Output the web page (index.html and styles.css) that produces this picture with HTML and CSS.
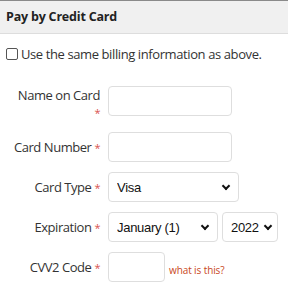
FILE: index.html
```html
<html lang="en">

<head>
    <meta charset="UTF-8">
    <meta name="viewport" content="width=device-width, initial-scale=1.0">
    <title>Pay by Credit Card</title>
    <link rel="stylesheet" href="styles.css">
</head>

<body>
    <div class="panel">
        <div class="panel-head">Pay by Credit Card</div>
        <label class="same-billing">
            <input type="checkbox" class="check">
            <span>Use the same billing information as above.</span>
        </label>

        <form id="card-form" action="/">
            <div class="form-row">
                <label for="card-name" class="field-label">Name on Card <span class="req">*</span></label>
                <input id="card-name" class="in" type="text">
            </div>
            <div class="form-row">
                <label for="card-number" class="field-label">Card Number <span class="req">*</span></label>
                <input id="card-number" class="in" type="text">
            </div>
            <div class="form-row">
                <label for="card-type" class="field-label">Card Type <span class="req">*</span></label>
                <div class="sel sel-type">
                    <select id="card-type">
                        <option>Visa</option>
                        <option>MasterCard</option>
                        <option>American Express</option>
                    </select>
                </div>
            </div>
            <div class="form-row">
                <label for="exp-month" class="field-label">Expiration <span class="req">*</span></label>
                <div class="sel sel-month">
                    <select id="exp-month">
                        <option>January (1)</option>
                    </select>
                </div>
                <div class="sel sel-year">
                    <select id="exp-year">
                        <option>2022</option>
                    </select>
                </div>
            </div>
            <div class="form-row">
                <label for="cvv" class="field-label">CVV2 Code <span class="req">*</span></label>
                <input id="cvv" class="in in-short" type="text">
                <a href="#" class="help">what is this?</a>
            </div>
        </form>
    </div>
</body>

</html>
```

FILE: styles.css
```css
body {
    margin: 0;
    background: #ffffff;
    font-family: 'Open Sans', sans-serif;
    color: #333333;
}

.panel-head {
    border-top: 1px solid #8a8a8a;
    border-bottom: 1px solid #dddddd;
    background-color: #f0f0f0;
    padding: 0 6px;
    height: 32px;
    line-height: 32px;
    font-size: 12.5px;
    letter-spacing: -0.2px;
    font-weight: bold;
    color: #222222;
}

.same-billing {
    display: flex;
    align-items: center;
    margin: 10px 0 0 6px;
    font-size: 13px;
    letter-spacing: -0.4px;
    line-height: 20px;
}

.check {
    appearance: none;
    width: 12px;
    height: 12px;
    margin: 0 3px 0 0;
    border: 1px solid #555555;
    border-radius: 2px;
    background: #ffffff;
}

#card-form {
    margin-top: 22px;
}

.form-row {
    display: flex;
    align-items: flex-start;
    margin-bottom: 10px;
}

.field-label {
    align-self: center;
    width: 88px;
    padding-left: 12px;
    margin-right: 8px;
    text-align: right;
    font-size: 13px;
    letter-spacing: -0.45px;
    line-height: 18px;
}

.req {
    color: #d9534f;
    font-size: 11px;
}

.in {
    box-sizing: border-box;
    width: 124px;
    height: 30px;
    border: 1px solid #dedede;
    border-radius: 4px;
    padding: 4px 8px;
    font-size: 13px;
}

.in:focus {
    outline: 0;
}

.in-short {
    width: 57px;
}

.sel {
    position: relative;
}

.sel select {
    box-sizing: border-box;
    appearance: none;
    width: 100%;
    height: 30px;
    border: 1px solid #dedede;
    border-radius: 4px;
    background: #ffffff;
    padding: 0 8px;
    font-family: 'Liberation Sans', Arial, sans-serif;
    font-size: 13px;
    letter-spacing: -0.3px;
    color: #111111;
}

.sel::after {
    content: '';
    position: absolute;
    right: 10px;
    top: 11px;
    width: 4px;
    height: 4px;
    border-right: 2px solid #111111;
    border-bottom: 2px solid #111111;
    transform: rotate(45deg);
    pointer-events: none;
}

.sel-type {
    width: 131px;
}

.sel-month {
    width: 110px;
    margin-right: 4px;
}

.sel-year {
    width: 56px;
}

.sel-year::after {
    right: 7px;
}

.help {
    align-self: center;
    margin: 6px 0 0 4px;
    font-size: 10px;
    letter-spacing: -0.1px;
    color: #c9471c;
    text-decoration: none;
}
```
